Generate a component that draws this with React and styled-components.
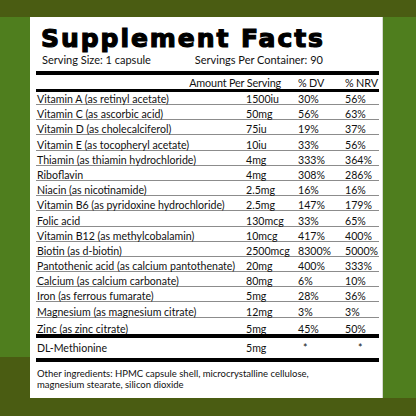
import React from 'react';
import styled, { createGlobalStyle } from 'styled-components';

const GlobalStyle = createGlobalStyle`
  html, body {
    margin: 0;
    padding: 0;
    background: #4f7e1e;
  }
  body {
    font-family: Lato, "Open Sans", sans-serif;
    color: #111;
  }
`;

const DARK = '#4a5c12';
const GREEN = '#4f7e1e';

const Page = styled.div`
  width: 416px;
  height: 416px;
  box-sizing: border-box;
  padding: 17px 33px 18px 30px;
  background:
    linear-gradient(${DARK}, ${DARK}) top / 100% 17px no-repeat,
    linear-gradient(${DARK}, ${DARK}) left bottom / 30px 59px no-repeat,
    linear-gradient(${DARK}, ${DARK}) bottom / 100% 18px no-repeat,
    ${GREEN};
`;

const Panel = styled.div`
  height: 100%;
  box-sizing: border-box;
  background: #fff;
  border-right: 1px solid #d6d9d0;
  padding: 0 3px 0 6px;
  display: flex;
  flex-direction: column;
`;

const Heading = styled.header`
  width: fit-content;
  padding: 8px 0 0 5px;
`;

const Title = styled.h1`
  margin: 0;
  font-family: "DejaVu Sans", sans-serif;
  font-weight: 700;
  font-size: 25px;
  line-height: 28px;
  letter-spacing: 1.95px;
  -webkit-text-stroke: 1.2px #000;
  color: #000;
`;

const ServingLine = styled.div`
  display: flex;
  justify-content: space-between;
  font-size: 11px;
  line-height: 12px;
  padding: 0 2px 0 1px;
  margin-top: 1px;
`;

const Bar = styled.div`
  height: ${(p) => p.$h}px;
  margin-top: ${(p) => p.$gap || 0}px;
  background: #000;
`;

const Grid = styled.div`
  display: grid;
  grid-template-columns: 209px 52px 47px 1fr;
  padding-left: 1px;
  font-size: 10.6px;
  white-space: nowrap;
`;

const HeadRow = styled(Grid)`
  height: 14px;
  align-items: center;
  font-size: 10.8px;
  letter-spacing: -0.15px;
`;

const AmountHead = styled.span`
  grid-column: 1 / span 2;
  text-align: right;
  padding-right: 17px;
`;

const Row = styled(Grid)`
  height: ${(p) => p.$h}px;
  box-sizing: border-box;
  border-bottom: ${(p) => (p.$last ? 'none' : '1px solid #8c8c8c')};
  align-items: end;
  line-height: 10px;
`;

const ExtraRow = styled(Grid)`
  height: 20px;
  align-items: center;
  line-height: 12px;
`;

const Star = styled.span`
  padding-left: ${(p) => p.$offset}px;
`;

const Other = styled.p`
  margin: 0;
  padding: 6px 0 0 1px;
  font-size: 9.5px;
  line-height: 11px;
`;

const rows = [
  ['Vitamin A (as retinyl acetate)', '1500iu', '30%', '56%'],
  ['Vitamin C (as ascorbic acid)', '50mg', '56%', '63%'],
  ['Vitamin D (as cholecalciferol)', '75iu', '19%', '37%'],
  ['Vitamin E (as tocopheryl acetate)', '10iu', '33%', '56%'],
  ['Thiamin (as thiamin hydrochloride)', '4mg', '333%', '364%'],
  ['Riboflavin', '4mg', '308%', '286%'],
  ['Niacin (as nicotinamide)', '2.5mg', '16%', '16%'],
  ['Vitamin B6 (as pyridoxine hydrochloride)', '2.5mg', '147%', '179%'],
  ['Folic acid', '130mcg', '33%', '65%'],
  ['Vitamin B12 (as methylcobalamin)', '10mcg', '417%', '400%'],
  ['Biotin (as d-biotin)', '2500mcg', '8300%', '5000%'],
  ['Pantothenic acid (as calcium pantothenate)', '20mg', '400%', '333%'],
  ['Calcium (as calcium carbonate)', '80mg', '6%', '10%'],
  ['Iron (as ferrous fumarate)', '5mg', '28%', '36%'],
  ['Magnesium (as magnesium citrate)', '12mg', '3%', '3%'],
  ['Zinc (as zinc citrate)', '5mg', '45%', '50%'],
];

const rowHeight = (i) => {
  if (i === 0) return 13;
  if (i === rows.length - 1) return 16;
  return 15.2;
};

export default function App() {
  return (
    <>
      <GlobalStyle />
      <Page>
        <Panel>
          <Heading>
            <Title>Supplement Facts</Title>
            <ServingLine>
              <span>Serving Size: 1 capsule</span>
              <span>Servings Per Container: 90</span>
            </ServingLine>
          </Heading>
          <Bar $h={4} $gap={5} />
          <HeadRow>
            <AmountHead>Amount Per Serving</AmountHead>
            <span>% DV</span>
            <span>% NRV</span>
          </HeadRow>
          <Bar $h={3} />
          {rows.map((r, i) => (
            <Row key={r[0]} $h={rowHeight(i)} $last={i === rows.length - 1}>
              {r.map((c) => (
                <span key={c}>{c}</span>
              ))}
            </Row>
          ))}
          <Bar $h={4} />
          <ExtraRow>
            <span>DL-Methionine</span>
            <span>5mg</span>
            <Star $offset={5}>*</Star>
            <Star $offset={13}>*</Star>
          </ExtraRow>
          <Bar $h={4} />
          <Other>
            Other ingredients: HPMC capsule shell, microcrystalline cellulose,
            <br />
            magnesium stearate, silicon dioxide
          </Other>
        </Panel>
      </Page>
    </>
  );
}
